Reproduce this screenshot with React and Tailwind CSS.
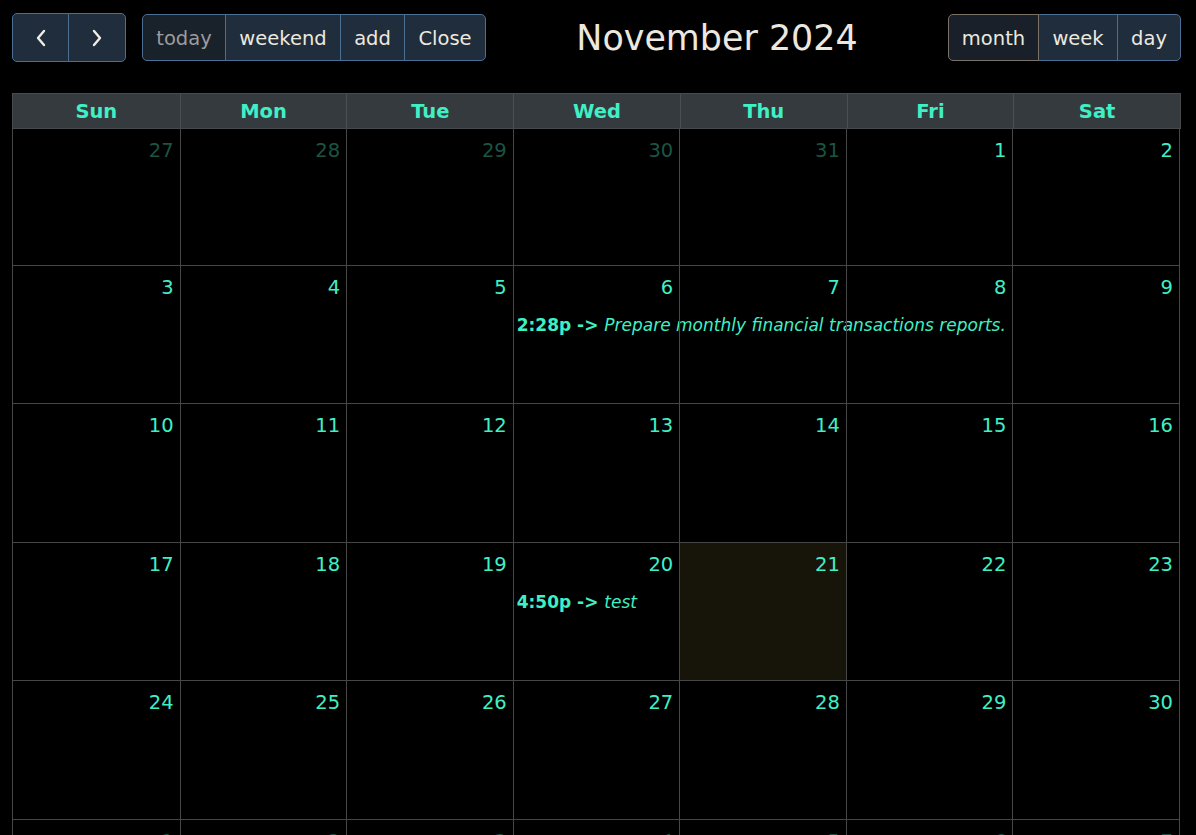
import React from "react"

const days = ["Sun", "Mon", "Tue", "Wed", "Thu", "Fri", "Sat"]

const weeks = [
    [[27, true], [28, true], [29, true], [30, true], [31, true], [1], [2]],
    [[3], [4], [5], [6], [7], [8], [9]],
    [[10], [11], [12], [13], [14], [15], [16]],
    [[17], [18], [19], [20], [21], [22], [23]],
    [[24], [25], [26], [27], [28], [29], [30]],
    [[1, true], [2, true], [3, true], [4, true], [5, true], [6, true], [7, true]],
]

const rowHeights = ["h-[137px]", "h-[138px]", "h-[139px]", "h-[138px]", "h-[139px]", "h-[138px]"]

const events = {
    "1-3": { time: "2:28p", title: "Prepare monthly financial transactions reports." },
    "3-3": { time: "4:50p", title: "test" },
}

const Chevron = ({ left }) => (
    <svg width="12" height="18" viewBox="0 0 12 18" fill="none">
        <path
            d={left ? "M9 2 L3 9 L9 16" : "M3 2 L9 9 L3 16"}
            stroke="#f2ede4"
            strokeWidth="2.4"
            strokeLinecap="round"
            strokeLinejoin="round"
        />
    </svg>
)

const btn = "h-full flex items-center pt-[2px] bg-[#1f2d3d] border border-[#4b6f93] -ml-px first:ml-0 first:rounded-l-[5px] last:rounded-r-[5px]"

const App = () => {
    return (
        <div className="h-[835px] bg-black px-3 pt-[13px] overflow-hidden text-[19.5px]" style={{ fontFamily: '"DejaVu Sans", Verdana, sans-serif' }}>
            {/* Toolbar */}
            <div className="flex items-center h-[49px] text-[#ede8df] pr-[3px]">
                <div className="flex h-[49px]">
                    <button className={btn + " !pt-0 w-[57px] justify-center"}><Chevron left /></button>
                    <button className={btn + " !pt-0 w-[58px] justify-center"}><Chevron /></button>
                </div>
                <div className="flex h-[47px] ml-4">
                    <button className={btn + " !bg-[#19212b] text-[#9c9c9c] w-[84px] justify-center"}>today</button>
                    <button className={btn + " w-[116px] justify-center"}>weekend</button>
                    <button className={btn + " w-[65px] justify-center"}>add</button>
                    <button className={btn + " w-[82px] justify-center"}>Close</button>
                </div>
                <div className="flex-1 flex justify-center">
                    <h2 className="text-[34.9px] text-[#ede8df] leading-none pt-[2px]">November 2024</h2>
                </div>
                <div className="flex h-[47px]">
                    <button className={btn + " !bg-[#19202a] !border-[#7a7167] w-[91px] justify-center z-10"}>month</button>
                    <button className={btn + " w-[80px] justify-center"}>week</button>
                    <button className={btn + " w-[64px] justify-center"}>day</button>
                </div>
            </div>

            {/* Calendar grid */}
            <div className="mt-[31px] w-[1169px]">
                <div className="grid grid-cols-7 h-[36px] bg-[#343a3d] border border-[#474a4c]">
                    {days.map((d) => (
                        <div key={d} className="flex items-center justify-center pt-[2px] font-bold text-[#3ff0c5] border-l border-[#4a4f52] first:border-l-0">
                            {d}
                        </div>
                    ))}
                </div>
                <div className="w-[1168px] border-l border-r border-[#474747]">
                    {weeks.map((week, wi) => (
                        <div key={wi} className={"grid grid-cols-7 border-b border-[#474747] " + rowHeights[wi]}>
                            {week.map(([n, other], di) => {
                                const ev = events[`${wi}-${di}`]
                                const today = wi === 3 && di === 4
                                return (
                                    <div
                                        key={di}
                                        className={"relative border-l border-[#474747] first:border-l-0 " + (today ? "bg-[#17140a]" : "")}
                                    >
                                        <div className={"text-right pr-[6px] pt-[7px] leading-[29px] " + (other ? "text-[#1b5444]" : "text-[#3ff0c5]")}>
                                            {n}
                                        </div>
                                        {ev && (
                                            <div className="relative z-0 mt-[11px] pl-[3px] whitespace-nowrap text-[17px] leading-[25px] text-[#3ff0c5]">
                                                <span className="font-bold">{ev.time} -&gt; </span>
                                                <span className="italic">{ev.title}</span>
                                            </div>
                                        )}
                                    </div>
                                )
                            })}
                        </div>
                    ))}
                </div>
            </div>
        </div>
    )
}

export default App
